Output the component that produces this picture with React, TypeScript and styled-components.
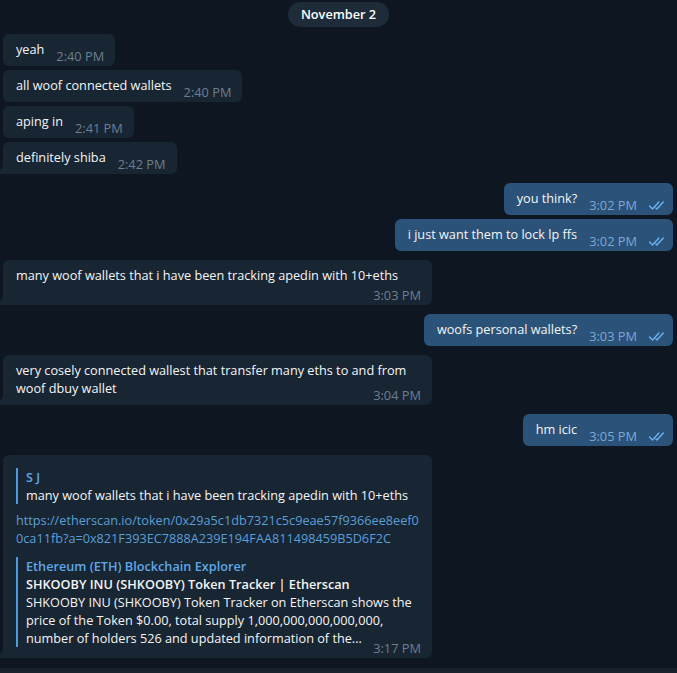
import React from 'react';
import styled, { createGlobalStyle, css } from 'styled-components';

const Global = createGlobalStyle`
  html, body { margin: 0; padding: 0; background: #0e1621; }
  body {
    font-family: "Open Sans", "Noto Sans", sans-serif;
    color: #f5f5f5;
    overflow: hidden;
    -webkit-font-smoothing: antialiased;
  }
`;

const Page = styled.div`
  height: 673px;
  display: flex;
  flex-direction: column;
  background: #0e1621;
`;

const Feed = styled.div`
  flex: 1;
  display: flex;
  flex-direction: column;
  padding-top: 2px;
  overflow: hidden;
`;

const InputBar = styled.div`
  height: 5px;
  flex-shrink: 0;
  background: #17212b;
`;

const DateRow = styled.div`
  display: flex;
  justify-content: center;
  margin-bottom: 7px;
`;

const DatePill = styled.div`
  height: 25px;
  padding: 0 13px;
  border-radius: 13px;
  background: #1e2c3a;
  color: #ffffff;
  font-size: 12.7px;
  font-weight: 600;
  line-height: 25px;
`;

const Row = styled.div<{ $out?: boolean; $gap: number }>`
  display: flex;
  justify-content: ${(p) => (p.$out ? 'flex-end' : 'flex-start')};
  padding: 0 4px 0 3px;
  margin-top: ${(p) => p.$gap}px;
`;

const Bubble = styled.div<{ $out?: boolean; $tail?: boolean; $wide?: boolean }>`
  position: relative;
  display: flow-root;
  box-sizing: border-box;
  max-width: 429px;
  ${(p) => p.$wide && 'width: 429px;'}
  padding: 6px ${(p) => (p.$out ? 8 : 11)}px 3px 13px;
  border-radius: 6px;
  background: ${(p) => (p.$out ? '#2b5278' : '#182533')};
  font-size: 12.7px;
  line-height: 18px;
  color: #f5f5f5;
  ${(p) =>
    p.$tail &&
    !p.$out &&
    css`
      border-bottom-left-radius: 0;
      &::before {
        content: '';
        position: absolute;
        left: -6px;
        bottom: 0;
        width: 6px;
        height: 8px;
        background: #182533;
        clip-path: polygon(0 100%, 100% 0, 100% 100%);
      }
    `}
`;

const Time = styled.span<{ $out?: boolean; $own?: boolean; $lift?: boolean }>`
  float: right;
  display: flex;
  align-items: center;
  margin: 9px 0 0 12px;
  font-size: 12.8px;
  line-height: 14px;
  white-space: nowrap;
  color: ${(p) => (p.$out ? '#7da8d3' : '#6d7f8f')};
  ${(p) =>
    p.$own &&
    css`
      float: none;
      justify-content: flex-end;
      margin: 4px 0 0 0;
    `}
  ${(p) =>
    p.$lift &&
    css`
      float: none;
      justify-content: flex-end;
      margin: -6px 0 0 0;
    `}
`;

const Checks = styled.svg`
  margin-left: 11px;
  flex-shrink: 0;
`;

const Quote = styled.div<{ $gapTop: number }>`
  margin-top: ${(p) => p.$gapTop}px;
  padding-left: 8px;
  border-left: 2px solid #4f9be0;
`;

const Name = styled.div`
  color: #5fa8e8;
  font-weight: 600;
`;

const Link = styled.div`
  margin-top: 7px;
  color: #5b9fd8;
`;

const PreviewTitle = styled.div`
  font-weight: 600;
  color: #f5f5f5;
`;

const DoubleCheck = () => (
  <Checks width="17" height="11" viewBox="0 0 17 11" fill="none">
    <path d="M1.5 5.9 L4.5 8.9 L10.9 2.1" stroke="#6ab3f3" strokeWidth="1.4" strokeLinecap="round" strokeLinejoin="round" />
    <path d="M7.9 8 L8.9 8.9 L15.3 2.1" stroke="#6ab3f3" strokeWidth="1.4" strokeLinecap="round" strokeLinejoin="round" />
  </Checks>
);

type Msg = {
  text: string;
  time: string;
  out?: boolean;
  gap: number;
  tail?: boolean;
  own?: boolean;
};

const messages: Msg[] = [
  { text: 'yeah', time: '2:40 PM', gap: 0 },
  { text: 'all woof connected wallets', time: '2:40 PM', gap: 4 },
  { text: 'aping in', time: '2:41 PM', gap: 4 },
  { text: 'definitely shiba', time: '2:42 PM', gap: 4, tail: true },
  { text: 'you think?', time: '3:02 PM', gap: 9, out: true },
  { text: 'i just want them to lock lp ffs', time: '3:02 PM', gap: 4, out: true },
  { text: 'many woof wallets that i have been tracking apedin with 10+eths', time: '3:03 PM', gap: 9, tail: true, own: true },
  { text: 'woofs personal wallets?', time: '3:03 PM', gap: 9, out: true },
  {
    text: 'very cosely connected wallest that transfer many eths to and from woof dbuy wallet',
    time: '3:04 PM',
    gap: 9,
    tail: true,
  },
  { text: 'hm icic', time: '3:05 PM', gap: 9, out: true },
];

export default function App() {
  return (
    <Page>
      <Global />
      <Feed>
        <DateRow>
          <DatePill>November 2</DatePill>
        </DateRow>
        {messages.map((m, i) => (
          <Row key={i} $out={m.out} $gap={m.gap}>
            <Bubble $out={m.out} $tail={m.tail} $wide={m.own}>
              {m.own ? (
                <>
                  {m.text}
                  <Time $own>{m.time}</Time>
                </>
              ) : (
                <>
                  {m.text}
                  <Time $out={m.out}>
                    {m.time}
                    {m.out && <DoubleCheck />}
                  </Time>
                </>
              )}
            </Bubble>
          </Row>
        ))}
        <Row $gap={9}>
          <Bubble $tail $wide>
            <Quote $gapTop={7}>
              <Name>S J</Name>
              <div>many woof wallets that i have been tracking apedin with 10+eths</div>
            </Quote>
            <Link>
              https://etherscan.io/token/0x29a5c1db7321c5c9eae57f9366ee8eef0
              <br />
              0ca11fb?a=0x821F393EC7888A239E194FAA811498459B5D6F2C
            </Link>
            <Quote $gapTop={10}>
              <Name>Ethereum (ETH) Blockchain Explorer</Name>
              <PreviewTitle>SHKOOBY INU (SHKOOBY) Token Tracker | Etherscan</PreviewTitle>
              <div>
                SHKOOBY INU (SHKOOBY) Token Tracker on Etherscan shows the
                <br />
                price of the Token $0.00, total supply 1,000,000,000,000,000,
                <br />
                number of holders 526 and updated information of the...
              </div>
            </Quote>
            <Time $lift>3:17 PM</Time>
          </Bubble>
        </Row>
      </Feed>
      <InputBar />
    </Page>
  );
}
